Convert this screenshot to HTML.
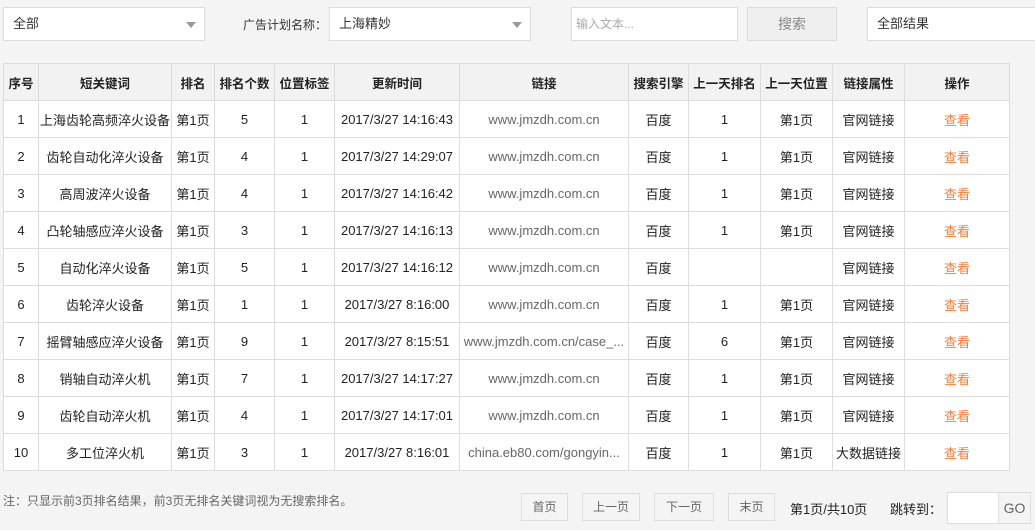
<!DOCTYPE html>
<html><head><meta charset="utf-8"><style>
*{margin:0;padding:0;box-sizing:border-box}
body{width:1035px;height:530px;background:#f4f4f4;font-family:"Liberation Sans","Noto Sans CJK SC",sans-serif;font-size:12px;color:#333;position:relative;overflow:hidden}
.b{position:absolute;background:#fff;border:1px solid #dcdcdc;height:34px;line-height:32px;padding-left:9px;font-size:13px}
.arr{position:absolute;right:8px;top:14px;width:0;height:0;border-left:5px solid transparent;border-right:5px solid transparent;border-top:6px solid #999}
table{position:absolute;left:3px;top:63px;border-collapse:collapse;background:#fff;table-layout:fixed}
td,th{border:1px solid #dcdcdc;text-align:center;height:37px;font-size:13px;white-space:nowrap;overflow:hidden;color:#222}
th{background:#f2f2f2;font-weight:bold;color:#222;font-size:12.5px}
td.l{color:#666}
td.o{color:#f0803c}
.pb{position:absolute;top:493px;height:28px;line-height:26px;border:1px solid #dcdcdc;background:#f4f4f4;text-align:center;color:#666;font-size:12px}
</style></head><body>
<div class="b" style="left:3px;top:7px;width:202px">全部<span class="arr"></span></div>
<div style="position:absolute;left:243px;top:16px;font-size:12px">广告计划名称：</div>
<div class="b" style="left:329px;top:7px;width:202px">上海精妙<span class="arr"></span></div>
<div class="b" style="left:571px;top:7px;width:167px;color:#aaa;font-size:12px;padding-left:4px">输入文本...</div>
<div class="b" style="left:747px;top:7px;width:90px;background:#efefef;text-align:center;padding:0;color:#888;font-size:14px">搜索</div>
<div class="b" style="left:867px;top:7px;width:180px">全部结果</div>
<table>
<colgroup><col style="width:35px"><col style="width:133px"><col style="width:43px"><col style="width:60px"><col style="width:60px"><col style="width:125px"><col style="width:169px"><col style="width:60px"><col style="width:72px"><col style="width:72px"><col style="width:72px"><col style="width:105px"></colgroup>
<tr><th>序号</th><th>短关键词</th><th>排名</th><th>排名个数</th><th>位置标签</th><th>更新时间</th><th>链接</th><th>搜索引擎</th><th>上一天排名</th><th>上一天位置</th><th>链接属性</th><th>操作</th></tr>
<tr><td>1</td><td>上海齿轮高频淬火设备</td><td>第1页</td><td>5</td><td>1</td><td>2017/3/27 14:16:43</td><td class="l">www.jmzdh.com.cn</td><td>百度</td><td>1</td><td>第1页</td><td>官网链接</td><td class="o">查看</td></tr>
<tr><td>2</td><td>齿轮自动化淬火设备</td><td>第1页</td><td>4</td><td>1</td><td>2017/3/27 14:29:07</td><td class="l">www.jmzdh.com.cn</td><td>百度</td><td>1</td><td>第1页</td><td>官网链接</td><td class="o">查看</td></tr>
<tr><td>3</td><td>高周波淬火设备</td><td>第1页</td><td>4</td><td>1</td><td>2017/3/27 14:16:42</td><td class="l">www.jmzdh.com.cn</td><td>百度</td><td>1</td><td>第1页</td><td>官网链接</td><td class="o">查看</td></tr>
<tr><td>4</td><td>凸轮轴感应淬火设备</td><td>第1页</td><td>3</td><td>1</td><td>2017/3/27 14:16:13</td><td class="l">www.jmzdh.com.cn</td><td>百度</td><td>1</td><td>第1页</td><td>官网链接</td><td class="o">查看</td></tr>
<tr><td>5</td><td>自动化淬火设备</td><td>第1页</td><td>5</td><td>1</td><td>2017/3/27 14:16:12</td><td class="l">www.jmzdh.com.cn</td><td>百度</td><td></td><td></td><td>官网链接</td><td class="o">查看</td></tr>
<tr><td>6</td><td>齿轮淬火设备</td><td>第1页</td><td>1</td><td>1</td><td>2017/3/27 8:16:00</td><td class="l">www.jmzdh.com.cn</td><td>百度</td><td>1</td><td>第1页</td><td>官网链接</td><td class="o">查看</td></tr>
<tr><td>7</td><td>摇臂轴感应淬火设备</td><td>第1页</td><td>9</td><td>1</td><td>2017/3/27 8:15:51</td><td class="l">www.jmzdh.com.cn/case_...</td><td>百度</td><td>6</td><td>第1页</td><td>官网链接</td><td class="o">查看</td></tr>
<tr><td>8</td><td>销轴自动淬火机</td><td>第1页</td><td>7</td><td>1</td><td>2017/3/27 14:17:27</td><td class="l">www.jmzdh.com.cn</td><td>百度</td><td>1</td><td>第1页</td><td>官网链接</td><td class="o">查看</td></tr>
<tr><td>9</td><td>齿轮自动淬火机</td><td>第1页</td><td>4</td><td>1</td><td>2017/3/27 14:17:01</td><td class="l">www.jmzdh.com.cn</td><td>百度</td><td>1</td><td>第1页</td><td>官网链接</td><td class="o">查看</td></tr>
<tr><td>10</td><td>多工位淬火机</td><td>第1页</td><td>3</td><td>1</td><td>2017/3/27 8:16:01</td><td class="l">china.eb80.com/gongyin...</td><td>百度</td><td>1</td><td>第1页</td><td>大数据链接</td><td class="o">查看</td></tr>
</table>
<div style="position:absolute;left:3px;top:492px;font-size:12px;color:#666">注：只显示前3页排名结果，前3页无排名关键词视为无搜索排名。</div>
<div class="pb" style="left:521px;width:47px">首页</div>
<div class="pb" style="left:582px;width:58px">上一页</div>
<div class="pb" style="left:654px;width:60px">下一页</div>
<div class="pb" style="left:728px;width:47px">末页</div>
<div style="position:absolute;left:790px;top:499px;font-size:13px;color:#222">第1页/共10页</div>
<div style="position:absolute;left:890px;top:499px;font-size:13px;color:#222">跳转到：</div>
<div style="position:absolute;left:947px;top:492px;width:52px;height:32px;background:#fff;border:1px solid #dcdcdc"></div>
<div style="position:absolute;left:998px;top:492px;width:33px;height:32px;line-height:30px;border:1px solid #dcdcdc;text-align:center;color:#666;font-size:14px">GO</div>
</body></html>
